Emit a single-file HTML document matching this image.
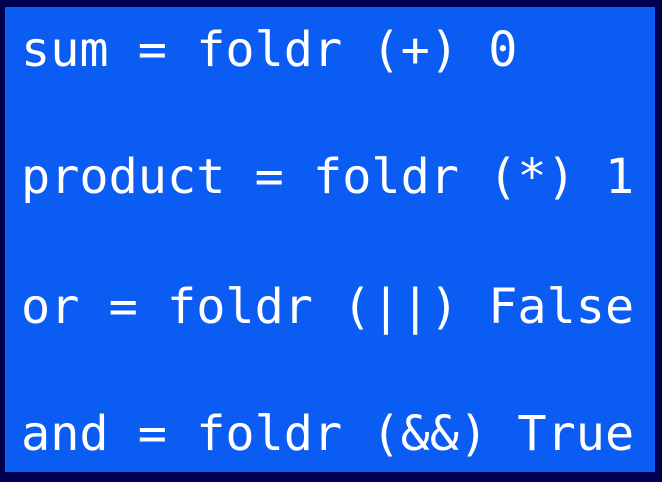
<!DOCTYPE html>
<html><head><style>
html,body{margin:0;padding:0;width:662px;height:482px;overflow:hidden;background:#000050;}
.box{position:absolute;left:5px;top:7px;width:650px;height:465px;background:#0a5cf2;}
.l{position:absolute;left:21px;font-family:"DejaVu Sans Mono","Liberation Mono",monospace;font-size:48.5px;color:#fff;white-space:pre;line-height:1;}
</style></head><body>
<div class="box"></div>
<div class="l" style="top:26px">sum = foldr (+) 0</div>
<div class="l" style="top:153px">product = foldr (*) 1</div>
<div class="l" style="top:283px">or = foldr (||) False</div>
<div class="l" style="top:410px">and = foldr (&amp;&amp;) True</div>
</body></html>
